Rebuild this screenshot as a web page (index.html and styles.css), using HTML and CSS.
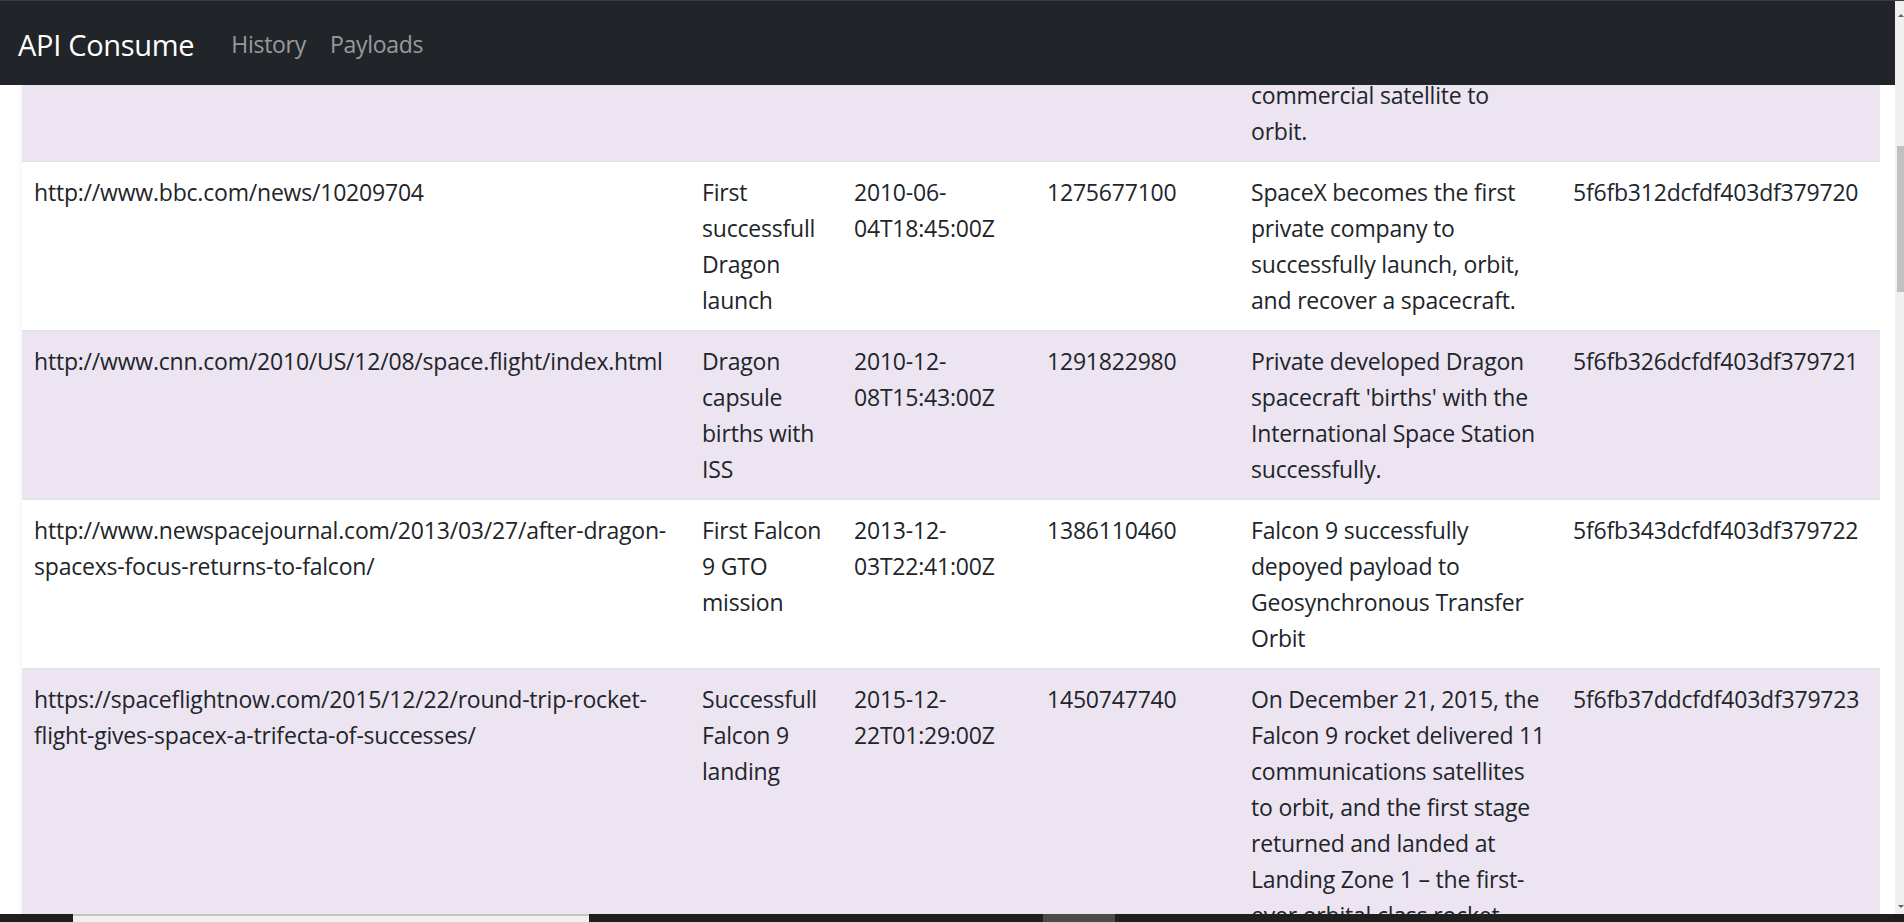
FILE: index.html
```html
<!DOCTYPE html>
<html lang="en">
<head>
<meta charset="utf-8">
<title>API Consume</title>
<link rel="stylesheet" href="styles.css">
</head>
<body>
<div class="window">
  <div class="viewport">
    <main class="container">
      <table class="table">
        <colgroup>
          <col class="c-link">
          <col class="c-title">
          <col class="c-date">
          <col class="c-unix">
          <col class="c-details">
          <col class="c-id">
        </colgroup>
        <tbody>
          <tr class="partial">
            <td></td>
            <td></td>
            <td></td>
            <td></td>
            <td>commercial satellite to orbit.</td>
            <td></td>
          </tr>
          <tr>
            <td>http://www.bbc.com/news/10209704</td>
            <td>First successfull Dragon launch</td>
            <td>2010-06-04T18:45:00Z</td>
            <td>1275677100</td>
            <td>SpaceX becomes the first private company to successfully launch, orbit, and recover a spacecraft.</td>
            <td>5f6fb312dcfdf403df379720</td>
          </tr>
          <tr>
            <td>http://www.cnn.com/2010/US/12/08/space.flight/index.html</td>
            <td>Dragon capsule births with ISS</td>
            <td>2010-12-08T15:43:00Z</td>
            <td>1291822980</td>
            <td>Private developed Dragon spacecraft 'births' with the International Space Station successfully.</td>
            <td>5f6fb326dcfdf403df379721</td>
          </tr>
          <tr>
            <td>http://www.newspacejournal.com/2013/03/27/after-dragon-spacexs-focus-returns-to-falcon/</td>
            <td>First Falcon 9 GTO mission</td>
            <td>2013-12-03T22:41:00Z</td>
            <td>1386110460</td>
            <td>Falcon 9 successfully depoyed payload to Geosynchronous Transfer Orbit</td>
            <td>5f6fb343dcfdf403df379722</td>
          </tr>
          <tr>
            <td>https://spaceflightnow.com/2015/12/22/round-trip-rocket-flight-gives-spacex-a-trifecta-of-successes/</td>
            <td>Successfull Falcon 9 landing</td>
            <td>2015-12-22T01:29:00Z</td>
            <td>1450747740</td>
            <td>On December 21, 2015, the Falcon 9 rocket delivered 11 communications satellites to orbit, and the first stage returned and landed at Landing Zone 1 – the first-ever orbital class rocket landing.</td>
            <td>5f6fb37ddcfdf403df379723</td>
          </tr>
        </tbody>
      </table>
    </main>
    <nav class="navbar">
      <a class="brand" href="#">API Consume</a>
      <ul class="nav">
        <li><a class="nav-link" href="#">History</a></li>
        <li><a class="nav-link" href="#">Payloads</a></li>
      </ul>
    </nav>
  </div>
  <div class="vscroll">
    <span class="arrow up"></span>
    <span class="thumb"></span>
    <span class="arrow down"></span>
  </div>
</div>
<div class="taskbar">
  <span class="tb-gap"></span>
  <span class="tb-window"></span>
  <span class="tb-fill"></span>
  <span class="tb-block"></span>
</div>
</body>
</html>
```

FILE: styles.css
```css
* { box-sizing: border-box; }

html, body {
  margin: 0;
  height: 922px;
  overflow: hidden;
  background: #ffffff;
  font-family: "Open Sans", "Noto Sans", sans-serif;
  color: #212529;
}

.window {
  display: flex;
  height: 914px;
  border-top: 1px solid #3c3c3c;
}

.viewport {
  position: relative;
  flex: 1;
  overflow: hidden;
  background: #ffffff;
}

/* navbar (fixed-top overlay) */
.navbar {
  position: absolute;
  top: 0;
  left: 0;
  right: 0;
  height: 84px;
  background: #212529;
  display: flex;
  align-items: center;
  padding: 2px 0 0 18px;
}

.brand {
  font-size: 29px;
  letter-spacing: -0.3px;
  color: #ffffff;
  text-decoration: none;
  margin-right: 25px;
}

.nav {
  display: flex;
  list-style: none;
  margin: 0;
  padding: 0;
}

.nav-link {
  display: block;
  padding: 0 12px;
  font-size: 23px;
  letter-spacing: -0.3px;
  color: rgba(255, 255, 255, 0.55);
  text-decoration: none;
}

/* content */
.container {
  padding: 76px 15px 0 22px;
  border-left: 0;
}

.table {
  width: 100%;
  table-layout: fixed;
  border-collapse: collapse;
  font-size: 23px;
  letter-spacing: -0.2px;
  line-height: 36px;
  color: #212529;
  box-shadow: -4px 0 4px -2px rgba(120, 150, 120, 0.08);
}

.c-link { width: 668px; }
.c-title { width: 152px; }
.c-date { width: 193px; }
.c-unix { width: 204px; }
.c-details { width: 322px; }
.c-id { width: 319px; }

.table td {
  padding: 12px;
  vertical-align: top;
  border-top: 1px solid #dee2e6;
  overflow-wrap: normal;
}

.table tr:nth-child(odd) td {
  background: #ece4f1;
}

.table tr.partial td {
  padding-top: 0;
  border-top: 0;
}

/* vertical scrollbar */
.vscroll {
  position: relative;
  width: 9px;
  background: #f0f0f0;
}

.thumb {
  position: absolute;
  top: 145px;
  left: 2px;
  right: 0;
  height: 146px;
  background: #c1c1c1;
}

.arrow {
  position: absolute;
  left: 3px;
  width: 0;
  height: 0;
  border-left: 3px solid transparent;
  border-right: 3px solid transparent;
}

.arrow.up {
  top: 13px;
  border-bottom: 3px solid #606060;
}

.arrow.down {
  bottom: 6px;
  border-top: 3px solid #606060;
}

/* bottom strip */
.taskbar {
  display: flex;
  height: 8px;
  background: #1f1f1f;
}

.tb-gap { width: 73px; }

.tb-window {
  width: 516px;
  background: #f0f0f0;
  border-top: 2px solid #c4c4c4;
}

.tb-fill { width: 454px; }

.tb-block {
  width: 72px;
  background: #4b4b4b;
}
```
